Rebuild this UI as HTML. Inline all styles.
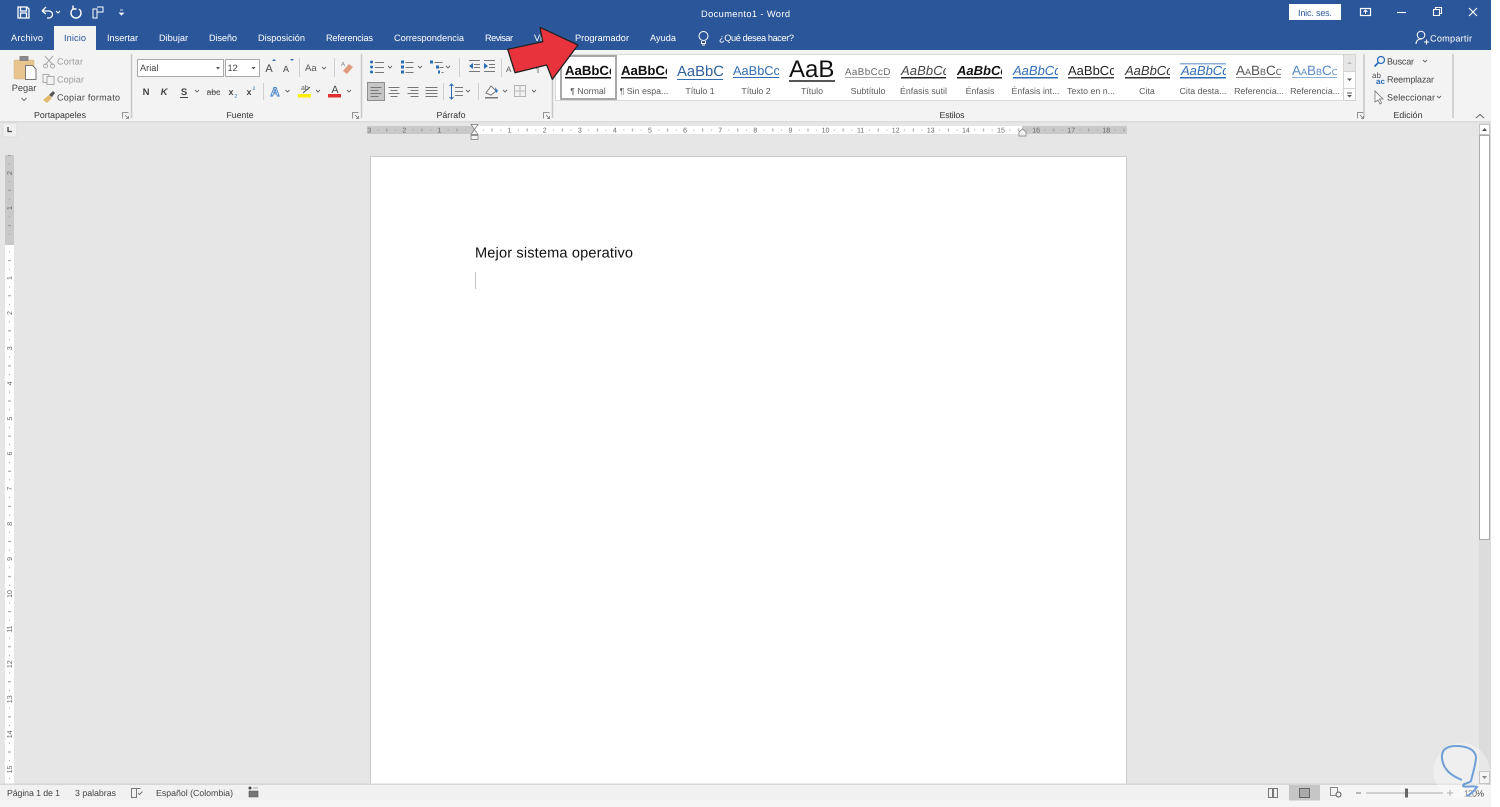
<!DOCTYPE html>
<html lang="es"><head><meta charset="utf-8"><title>Documento1 - Word</title>
<style>
html,body{margin:0;padding:0;background:#fff;width:1500px;height:807px;overflow:hidden}
svg{display:block;position:absolute;left:0;top:0}
text{font-family:"Liberation Sans",sans-serif;font-size:9px;fill:#444;text-rendering:geometricPrecision}
.w{fill:#fff}.tab{fill:#fff;font-size:9.2px}
.g{fill:#9a9a9a}.c{text-anchor:middle}.gl{font-size:8.8px;fill:#333;font-weight:normal}
.lab{font-size:8.8px;fill:#5a5a5a;text-anchor:middle}
.r{font-size:7px;fill:#666;text-anchor:middle}
.st{stroke:#666;fill:none;stroke-width:1}
.ch{stroke:#666;fill:none;stroke-width:.9}
.ln{stroke:#777;stroke-width:1}
.sep{stroke:#cfcfcf;stroke-width:1}
.big{stroke:#c8c8c8;stroke-width:1.5}
.soft{filter:blur(.3px)}
</style></head><body>
<svg width="1500" height="807" viewBox="0 0 1500 807" xmlns="http://www.w3.org/2000/svg">
<defs>
<pattern id="hr" patternUnits="userSpaceOnUse" x="474.5" y="126" width="35.1" height="8">
<rect x="8.3" y="3.6" width="1" height="1" fill="#999"/><rect x="17.1" y="2.5" width="1" height="3" fill="#999"/><rect x="25.8" y="3.6" width="1" height="1" fill="#999"/>
</pattern>
<pattern id="vr" patternUnits="userSpaceOnUse" x="5" y="243" width="9" height="35.1">
<rect x="4" y="8.3" width="1" height="1" fill="#999"/><rect x="3" y="17.1" width="3" height="1" fill="#999"/><rect x="4" y="25.8" width="1" height="1" fill="#999"/>
</pattern>
</defs>

<!-- base -->
<rect x="0" y="0" width="1491" height="807" fill="#e6e6e6"/>
<rect x="0" y="0" width="1491" height="50" fill="#2b579a"/>
<rect x="0" y="50" width="1491" height="71" fill="#f3f3f3"/>
<rect x="0" y="121" width="1491" height="1.5" fill="#dcdcdc"/>
<rect x="1491" y="0" width="9" height="807" fill="#fff"/>

<!-- page -->
<rect x="370.500" y="156.500" width="756" height="630" fill="#fff" stroke="#cccccc"/>
<text x="475" y="257.500" style="font-size:14.600px;fill:#111" textLength="158">Mejor sistema operativo</text>
<rect x="475" y="272" width="1" height="17" fill="#c4c4c4"/>

<g class="soft">
<!-- QAT -->
<g fill="none" stroke="#fff" stroke-width="1.300">
<path d="M18 7h9l2 2v9H18zM20.500 7v4h6V7M20.500 18v-5h6v5"/>
<path d="M42 11l4-4M42 11l4 3M42 11h7a3.500 3.500 0 0 1 0 7h-2"/>
<path d="M79 9a5 5 0 1 1-6 0M73 5.500V9h3.500" stroke-width="1.400"/>
<path d="M93 9h4v9h-4zM97 7h6v5h-6" stroke-width="1"/>
</g>
<path d="M56 11l2 2 2-2" stroke="#fff" fill="none"/>
<path d="M120 10h3M119.500 13h4l-2 2z" stroke="#fff" stroke-width=".8" fill="#fff"/>
<text class="w c" x="745.500" y="17" style="font-size:9.300px" textLength="89">Documento1 - Word</text>

<!-- window controls -->
<rect x="1289" y="4" width="52" height="16" fill="#fff"/>
<text x="1298" y="16" style="font-size:9px;fill:#2b579a" textLength="34">Inic. ses.</text>
<g fill="none" stroke="#fff">
<rect x="1360.500" y="8.500" width="10" height="7" stroke-width="1.200"/><path d="M1365.500 14v-4M1363.500 12l2-2 2 2"/>
<path d="M1397 12.500h9" stroke-width="1.100"/>
<path d="M1433.500 9.500h6v6h-6zM1435.500 9.500v-2h6v6h-2" stroke-width="1.100"/>
<path d="M1469 8l8 8M1477 8l-8 8" stroke-width="1.100"/>
<circle cx="1421" cy="35" r="3.800"/><path d="M1416 44c0-3 2-5 5-5h1M1424 42h5M1426.500 39.500v5"/>
</g>
<text class="w" x="1430" y="41.500" style="font-size:9.200px" textLength="42">Compartir</text>

<!-- tabs -->
<path d="M54.500 50V26.500h41V50" fill="#f3f3f3" stroke="#f3f3f3"/>
<text class="tab" x="11" y="41" textLength="32">Archivo</text>
<text x="64" y="41" style="font-size:9.200px;fill:#2b579a" textLength="22">Inicio</text>
<text class="tab" x="107" y="41" textLength="31">Insertar</text>
<text class="tab" x="159" y="41" textLength="29">Dibujar</text>
<text class="tab" x="209" y="41" textLength="28">Diseño</text>
<text class="tab" x="258" y="41" textLength="47">Disposición</text>
<text class="tab" x="326" y="41" textLength="47">Referencias</text>
<text class="tab" x="394" y="41" textLength="70">Correspondencia</text>
<text class="tab" x="485" y="41" textLength="28">Revisar</text>
<text class="tab" x="534" y="41">Vista</text>
<text class="tab" x="575" y="41" textLength="54">Programador</text>
<text class="tab" x="650" y="41" textLength="26">Ayuda</text>
<g fill="none" stroke="#fff" stroke-width="1"><circle cx="703.500" cy="36" r="4.500"/><path d="M701.500 41v2.500h4V41M702 45h3"/></g>
<text class="tab" x="719" y="41" textLength="75">¿Qué desea hacer?</text>

<!-- separators big -->
<path class="big" d="M131.500 54v64M361.500 54v64M552.500 54v64M1364 54v64M1453 54v64"/>

<!-- Portapapeles -->
<rect x="14" y="60" width="20" height="19" rx="1" fill="#e8c48f" stroke="#d9b47c" stroke-width=".5"/>
<rect x="19.500" y="56" width="9" height="5" fill="#888"/>
<path d="M25.500 65.500h7l3.500 3.500v10.500h-10.500z" fill="#fff" stroke="#777"/>
<text class="c" x="24" y="91" style="font-size:9.200px">Pegar</text>
<path class="ch" d="M21.500 98l2.500 2.500 2.500-2.500"/>
<g stroke="#aaa" fill="none"><path d="M45 56l8 9M53 56l-8 9"/><circle cx="45.500" cy="66" r="2"/><circle cx="52.500" cy="66" r="2"/>
<rect x="43" y="74.500" width="6" height="8"/><rect x="47" y="76.500" width="7" height="8" fill="#f3f3f3"/></g>
<text class="g" x="57" y="64.500" textLength="26">Cortar</text>
<text class="g" x="57" y="82.500" textLength="27">Copiar</text>
<path d="M43 100l6-5 3 3-5 5z" fill="#e2b96f"/><path d="M49 95l4-4 2 2-3 4z" fill="#555"/>
<text x="57" y="100.500" textLength="63">Copiar formato</text>
<text class="gl c" x="60" y="118" textLength="52">Portapapeles</text>
<g id="lc" fill="none" stroke="#777" stroke-width=".8"><path d="M122.500 118.500v-6h6M125 115l3.500 3.500M128.500 116v2.500H126"/></g>

<!-- Fuente -->
<rect x="137.500" y="59.500" width="86" height="17" fill="#fff" stroke="#a8a8a8"/>
<text x="140" y="71" style="font-size:9.200px">Arial</text>
<path d="M216 67l2 2.500 2-2.500z" fill="#555"/>
<rect x="225.500" y="59.500" width="34" height="17" fill="#fff" stroke="#a8a8a8"/>
<text x="227.500" y="71" style="font-size:9.200px">12</text>
<path d="M251.500 67l2 2.500 2-2.500z" fill="#555"/>
<text class="c" x="269" y="72" style="font-size:11px;fill:#444">A</text><path d="M272 61l2-2 2 2z" fill="#2b6cb8"/>
<text class="c" x="286" y="72" style="font-size:9px;fill:#444">A</text><path d="M290 59h4l-2 2z" fill="#2b6cb8"/>
<path class="sep" d="M299.500 58v19M334.500 58v19M263.500 83v17M443.500 83v17M478.500 83v17M459.500 58v19M501.500 58v19"/>
<text x="305" y="71" style="font-size:9.500px;fill:#555">Aa</text>
<path class="ch" d="M322 67l2 2 2-2"/>
<path d="M343 71l6-7 4 3-6 7z" fill="#e09a7e"/><text x="341" y="66" style="font-size:6px;fill:#777">A</text>
<text class="c" x="146" y="95" style="font-weight:bold;font-size:9.500px;fill:#444">N</text>
<text class="c" x="164" y="95" style="font-weight:bold;font-style:italic;font-size:9.500px;fill:#444">K</text>
<text class="c" x="184" y="95" style="font-weight:bold;font-size:9.500px;fill:#444">S</text><path d="M180 97.500h8" stroke="#444"/>
<path class="ch" d="M195 90l2 2 2-2M285.500 90l2 2 2-2M316 90l2 2 2-2M347 90l2 2 2-2"/>
<text class="c" x="213.500" y="95" style="font-size:8.500px;fill:#555">abc</text><path d="M207 92h13" stroke="#555" stroke-width=".7"/>
<text class="c" x="231" y="95" style="font-weight:bold;font-size:9px;fill:#444">x</text><text x="234.500" y="97.500" style="font-size:5px;fill:#2b6cb8">2</text>
<text class="c" x="249" y="95" style="font-weight:bold;font-size:9px;fill:#444">x</text><text x="252.500" y="90" style="font-size:5px;fill:#2b6cb8">2</text>
<text class="c" x="275" y="96" style="font-size:12.500px;font-weight:bold;fill:#fff;stroke:#3f7cc4;stroke-width:.9">A</text>
<text x="301" y="90" style="font-size:7px;fill:#555">ab</text><path d="M303 93l7-6" stroke="#555"/><rect x="298" y="94" width="13" height="3.500" fill="#ffee00"/>
<text class="c" x="335" y="93" style="font-size:10.500px;fill:#444">A</text><rect x="328" y="94" width="13" height="3.500" fill="#e03030"/>
<text class="gl c" x="240" y="118" textLength="27">Fuente</text>
<use href="#lc" x="230"/>

<!-- Parrafo row 1 -->
<g stroke="#777" stroke-width="1"><path d="M375 62.500h9M375 67.500h9M375 72.500h9"/></g>
<g fill="#2b6cb8"><circle cx="371.500" cy="62" r="1.500"/><circle cx="371.500" cy="67" r="1.500"/><circle cx="371.500" cy="72" r="1.500"/>
<rect x="401" y="60.500" width="3" height="3"/><rect x="401" y="65.500" width="3" height="3"/><rect x="401" y="70.500" width="3" height="3"/>
<rect x="430" y="60.500" width="3" height="3"/><rect x="436" y="65.500" width="3" height="3"/><rect x="438" y="70.500" width="2" height="3"/>
<path d="M469 66l4-3v6zM484 63v6l4-3z"/></g>
<g stroke="#777"><path d="M405.500 62.500h8M405.500 67.500h8M405.500 72.500h8M434.500 62.500h8M439.500 67.500h4M441.500 72.500h2M469 60.500h11M474 64.500h6M474 67.500h6M469 71.500h11M484 60.500h11M489 64.500h6M489 67.500h6M484 71.500h11"/></g>
<path class="ch" d="M388 66l2 2 2-2M418 66l2 2 2-2M446 66l2 2 2-2"/>
<text x="506" y="72" style="font-size:8px;fill:#555">A</text><text x="535" y="72" style="font-size:9px;fill:#777">¶</text>
<!-- Parrafo row 2 -->
<rect x="367.500" y="82.500" width="17" height="18" fill="#c6c6c6" stroke="#8f8f8f"/>
<g stroke="#777"><path d="M370.500 87.500h11M370.500 90.500h8M370.500 93.500h11M370.500 96.500h8"/>
<path d="M388.500 87.500h11M390.500 90.500h7M388.500 93.500h11M390.500 96.500h7"/>
<path d="M407.500 87.500h11M410.500 90.500h8M407.500 93.500h11M410.500 96.500h8"/>
<path d="M425.500 87.500h12M425.500 90.500h12M425.500 93.500h12M425.500 96.500h12"/>
<path d="M455 87.500h8M455 91.500h8M455 95.500h8"/></g>
<path d="M451.500 84v15M449.500 86l2-2 2 2M449.500 97l2 2 2-2" fill="none" stroke="#2b6cb8"/>
<path class="ch" d="M466 90l2 2 2-2M503 90l2 2 2-2M532 90l2 2 2-2"/>
<path d="M486 93l5-7 5 5-5 4z" fill="#fff" stroke="#777"/><path d="M495 87l3 4-2 2z" fill="#2b6cb8"/><rect x="485" y="97" width="13" height="1.500" fill="#777"/>
<path d="M514.500 85.500h11v11h-11zM520 85.500v11M514.500 91h11" fill="none" stroke="#b5b5b5"/>
<text class="gl c" x="451" y="118" textLength="29">Párrafo</text>
<use href="#lc" x="421"/>

<!-- Styles gallery -->
<rect x="555.500" y="54.500" width="800" height="46" fill="#fff" stroke="#dadada"/>
<rect x="561" y="56" width="55" height="43" fill="#fff" stroke="#a8a8a8" stroke-width="2"/>
<rect x="1343.500" y="54.500" width="12" height="17" fill="#e6e6e6" stroke="#d4d4d4"/>
<rect x="1343.500" y="71.500" width="12" height="17" fill="#fff" stroke="#d4d4d4"/>
<rect x="1343.500" y="88.500" width="12" height="12" fill="#fff" stroke="#d4d4d4"/>
<path d="M1347 64l2.500-2.500L1352 64z" fill="#bbb"/><path d="M1347 78.500l2.500 2.500 2.500-2.500z" fill="#555"/><path d="M1347 93h5" stroke="#555"/><path d="M1347 95l2.500 2.500 2.500-2.500z" fill="#555"/>

<g style="font-size:13px">
<svg x="562" y="58" width="49" height="22"><text x="3" y="17" style="font-size:13.200px;font-weight:bold;fill:#111">AaBbCc</text></svg>
<rect x="565" y="77" width="46" height="1.500" fill="#111"/>
<svg x="618" y="58" width="49" height="22"><text x="3" y="17" style="font-size:13.200px;font-weight:bold;fill:#111">AaBbCc</text></svg>
<rect x="621" y="77" width="46" height="1.500" fill="#111"/>
<svg x="675" y="58" width="48" height="22"><text x="2" y="18" style="font-size:14.800px;fill:#2f5f9f">AaBbC</text></svg>
<rect x="677" y="79" width="46" height="1" fill="#2f6db5"/>
<svg x="731" y="58" width="48" height="22"><text x="2" y="17" style="font-size:12.800px;fill:#2f6db5">AaBbCc</text></svg>
<rect x="733" y="77" width="46" height="1" fill="#2f6db5"/>
<svg x="786" y="59" width="50" height="21"><text x="3" y="18" style="font-size:24px;fill:#111">AaB</text></svg>
<rect x="789" y="80" width="46" height="2" fill="#555"/>
<svg x="843" y="58" width="47" height="22"><text x="2" y="17" style="font-size:9.800px;fill:#666;letter-spacing:.4px">AaBbCcD</text></svg>
<rect x="845" y="77" width="45" height="1" fill="#aaa"/>
<svg x="899" y="58" width="47" height="22"><text x="2" y="17" style="font-size:13px;font-style:italic;fill:#444;letter-spacing:.1px">AaBbCc</text></svg>
<rect x="901" y="77" width="45" height="1.500" fill="#222"/>
<svg x="955" y="58" width="47" height="22"><text x="2" y="17" style="font-size:13px;font-style:italic;font-weight:bold;fill:#111">AaBbCc</text></svg>
<rect x="957" y="77" width="45" height="1.500" fill="#222"/>
<svg x="1011" y="58" width="47" height="22"><text x="2" y="17" style="font-size:13px;font-style:italic;fill:#2f6db5">AaBbCc</text></svg>
<rect x="1013" y="77" width="45" height="1.500" fill="#2f6db5"/>
<svg x="1066" y="58" width="48" height="22"><text x="2" y="17" style="font-size:13px;fill:#222">AaBbCc</text></svg>
<rect x="1068" y="77" width="46" height="1.500" fill="#444"/>
<svg x="1123" y="58" width="47" height="22"><text x="2" y="17" style="font-size:13px;font-style:italic;fill:#333">AaBbCc</text></svg>
<rect x="1125" y="77" width="45" height="1.500" fill="#333"/>
<rect x="1180" y="63" width="46" height="1.500" fill="#8fb0d8"/>
<svg x="1179" y="58" width="47" height="22"><text x="2" y="17" style="font-size:13px;font-style:italic;fill:#2f6db5">AaBbCc</text></svg>
<rect x="1180" y="77" width="46" height="1.500" fill="#2f6db5"/>
<svg x="1234" y="58" width="47" height="22"><text x="2" y="17" style="font-size:13.500px;fill:#555;font-variant:small-caps">AaBbCc</text></svg>
<rect x="1236" y="77" width="45" height="1" fill="#888"/>
<svg x="1290" y="58" width="47" height="22"><text x="2" y="17" style="font-size:13.500px;fill:#5a8ac6;font-variant:small-caps">AaBbCc</text></svg>
<rect x="1292" y="77" width="45" height="1" fill="#8fb0d8"/>
</g>
<text class="lab" x="588" y="94">¶ Normal</text>
<text class="lab" x="644" y="94">¶ Sin espa...</text>
<text class="lab" x="700" y="94">Título 1</text>
<text class="lab" x="756" y="94">Título 2</text>
<text class="lab" x="812" y="94">Título</text>
<text class="lab" x="868" y="94">Subtítulo</text>
<text class="lab" x="923.500" y="94">Énfasis sutil</text>
<text class="lab" x="980" y="94">Énfasis</text>
<text class="lab" x="1035.500" y="94">Énfasis int...</text>
<text class="lab" x="1091" y="94">Texto en n...</text>
<text class="lab" x="1147" y="94">Cita</text>
<text class="lab" x="1203" y="94">Cita desta...</text>
<text class="lab" x="1259" y="94">Referencia...</text>
<text class="lab" x="1315" y="94">Referencia...</text>
<text class="gl c" x="952" y="118" textLength="25">Estilos</text>
<use href="#lc" x="1235"/>

<!-- Edicion -->
<g fill="none" stroke="#2b6cb8" stroke-width="1.300"><circle cx="1381" cy="60" r="3.500"/><path d="M1378.500 62.500l-4 4" stroke-width="1.800"/></g>
<text x="1387" y="64.500" textLength="27">Buscar</text>
<path class="ch" d="M1423 60l2 2 2-2M1437 96l2 2 2-2"/>
<text x="1372" y="78" style="font-size:8px;fill:#555">ab</text>
<text x="1376" y="84" style="font-size:8px;fill:#2b6cb8;font-weight:bold">ac</text>
<text x="1387" y="82.500" textLength="47">Reemplazar</text>
<path d="M1375 91l0 11 3-2 2 4 1.500-1-2-4h3.500z" fill="#fff" stroke="#777" stroke-width=".8"/>
<text x="1387" y="100.500" textLength="48">Seleccionar</text>
<text class="gl c" x="1408" y="118" textLength="29">Edición</text>
<path d="M1476 118l4-3.500 4 3.500" fill="none" stroke="#666"/>

<!-- rulers -->
<rect x="3" y="123" width="14" height="14" fill="#f0f0f0" stroke="#dcdcdc"/>
<path d="M8 127v4.500h4" stroke="#444" stroke-width="1.300" fill="none"/>
<rect x="367" y="126" width="760" height="8" fill="#fff"/>
<rect x="367" y="126" width="107" height="8" fill="#c9c9c9"/>
<rect x="1022" y="126" width="105" height="8" fill="#c9c9c9"/>
<rect x="367" y="126" width="760" height="8" fill="url(#hr)"/>
<g>
<text class="r" x="369.200" y="132.500">3</text><text class="r" x="404.300" y="132.500">2</text><text class="r" x="439.400" y="132.500">1</text>
<text class="r" x="509.600" y="132.500">1</text><text class="r" x="544.700" y="132.500">2</text><text class="r" x="579.800" y="132.500">3</text><text class="r" x="614.900" y="132.500">4</text><text class="r" x="650" y="132.500">5</text><text class="r" x="685.100" y="132.500">6</text><text class="r" x="720.200" y="132.500">7</text><text class="r" x="755.300" y="132.500">8</text><text class="r" x="790.400" y="132.500">9</text><text class="r" x="825.500" y="132.500">10</text><text class="r" x="860.600" y="132.500">11</text><text class="r" x="895.700" y="132.500">12</text><text class="r" x="930.800" y="132.500">13</text><text class="r" x="965.900" y="132.500">14</text><text class="r" x="1001" y="132.500">15</text><text class="r" x="1036.100" y="132.500">16</text><text class="r" x="1071.200" y="132.500">17</text><text class="r" x="1106.300" y="132.500">18</text>
</g>
<path d="M471 124.500h7l-3.500 5 3.500 5h-7l3.500-5zM471 135.500h7v4h-7z" fill="#f3f3f3" stroke="#777" stroke-width=".7"/>
<path d="M1019 136v-4l3.500-3 3.500 3v4z" fill="#f3f3f3" stroke="#777" stroke-width=".7"/>

<rect x="5" y="155" width="9" height="630" fill="#fff"/>
<rect x="5" y="155" width="9" height="90" fill="#c9c9c9"/>
<rect x="5" y="155" width="9" height="630" fill="url(#vr)"/>
<g>
<text class="r" transform="translate(12 173) rotate(-90)">2</text><text class="r" transform="translate(12 208) rotate(-90)">1</text>
<text class="r" transform="translate(12 278) rotate(-90)">1</text><text class="r" transform="translate(12 313) rotate(-90)">2</text><text class="r" transform="translate(12 348.300) rotate(-90)">3</text><text class="r" transform="translate(12 383.400) rotate(-90)">4</text><text class="r" transform="translate(12 418.500) rotate(-90)">5</text><text class="r" transform="translate(12 453.600) rotate(-90)">6</text><text class="r" transform="translate(12 488.700) rotate(-90)">7</text><text class="r" transform="translate(12 523.800) rotate(-90)">8</text><text class="r" transform="translate(12 558.900) rotate(-90)">9</text><text class="r" transform="translate(12 594) rotate(-90)">10</text><text class="r" transform="translate(12 629.100) rotate(-90)">11</text><text class="r" transform="translate(12 664.200) rotate(-90)">12</text><text class="r" transform="translate(12 699.300) rotate(-90)">13</text><text class="r" transform="translate(12 734.400) rotate(-90)">14</text><text class="r" transform="translate(12 769.500) rotate(-90)">15</text>
</g>

<!-- scrollbar -->
<rect x="1479" y="123" width="12" height="661" fill="#dcdcdc"/>
<rect x="1479.500" y="124.500" width="10" height="10" fill="#fff" stroke="#c4c4c4"/>
<path d="M1482 131l2.500-3 2.500 3z" fill="#555"/>
<rect x="1479.500" y="135.500" width="10" height="404" fill="#fff" stroke="#aaa"/>
<rect x="1479.500" y="771.500" width="10" height="12" fill="#f4f4f4" stroke="#c4c4c4"/>
<path d="M1482 776l2.500 3 2.500-3z" fill="#888"/>

<!-- status bar -->
<rect x="0" y="783.500" width="1491" height="24" fill="#f5f5f5"/>
<rect x="0" y="783.500" width="1491" height="1.500" fill="#d6d6d6"/>
<rect x="0" y="785" width="1335" height="15" fill="#f1f1f1"/>
<text x="7" y="796" style="font-size:8.800px" textLength="53">Página 1 de 1</text>
<text x="75" y="796" style="font-size:8.800px" textLength="41">3 palabras</text>
<path d="M131.500 788.500h5v9h-5zM136.500 788.500h4" fill="none" stroke="#777"/><path d="M138 793l1.500 1.500 3-3" stroke="#777" fill="none"/>
<text x="156" y="796" style="font-size:8.800px" textLength="77">Español (Colombia)</text>
<circle cx="250" cy="788" r="1.500" fill="#444"/><path d="M249 791h9v6h-9zM253 788h5" fill="#777" stroke="#555" stroke-width=".6"/>
<rect x="1289" y="785" width="31" height="15.500" fill="#c6c6c6"/>
<path d="M1268.500 788.500h4v9h-4zM1273.500 788.500h4v9h-4z" fill="none" stroke="#777"/>
<rect x="1299.500" y="788.500" width="10" height="9" fill="#aaa" stroke="#666"/>
<path d="M1330.500 787.500h7v8h-7z" fill="none" stroke="#888"/><circle cx="1338.500" cy="794.500" r="2.500" fill="#f3f3f3" stroke="#555"/>
<path d="M1356 793h5" stroke="#777"/>
<path d="M1366 793h77" stroke="#aaa"/>
<rect x="1405" y="788.500" width="3" height="9" fill="#666"/>
<path d="M1447 793h6M1450 790v6" stroke="#888"/>
<text x="1464" y="796.500" style="font-size:9px" textLength="20">120%</text>
</g>

<!-- arrow -->
<path d="M578 45L540 27.300 542.700 41.700 507.700 49.300 515 72.700 546.700 65 552.300 79.300Z" fill="#e8323c" stroke="#222" stroke-width="1.300" stroke-linejoin="round"/>

<!-- watermark -->
<circle cx="1461.500" cy="771" r="28" fill="#fff" opacity=".35"/>
<rect x="1479.500" y="771.500" width="10" height="12" fill="#f4f4f4" stroke="#c4c4c4"/>
<path d="M1482 776l2.500 3 2.500-3z" fill="#888"/>
<path d="M1462 780C1452 776 1443 770 1442 758 1441 749 1448 746 1456 746 1466 746 1475 749 1476 757 1476 764 1473 772 1471 781 1468 784 1463 783 1463 786 1466 788 1473 785 1477 787 1474 791 1471 794 1467 796" fill="none" stroke="#6f9fd6" stroke-width="2"/>
</svg>
</body></html>
